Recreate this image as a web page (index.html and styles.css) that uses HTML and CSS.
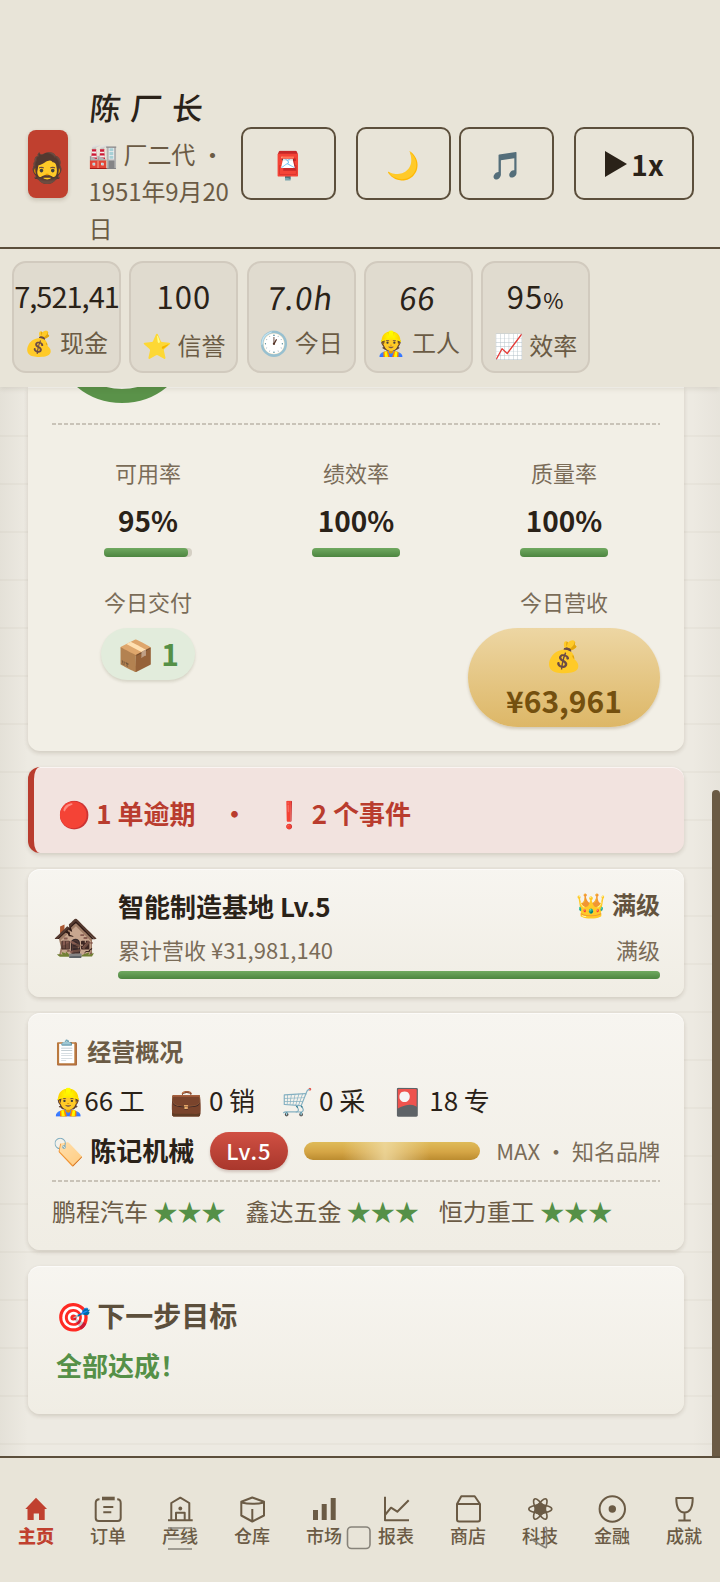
FILE: index.html
```html
<!DOCTYPE html>
<html lang="zh-CN">
<head>
<meta charset="utf-8">
<title>陈记机械</title>
<link rel="stylesheet" href="styles.css">
</head>
<body>
<div class="app">
  <header class="header">
    <div class="avatar">🧔</div>
    <div class="who">
      <div class="name">陈厂长</div>
      <div class="sub">🏭 厂二代 ・<br>1951年9月20<br>日</div>
    </div>
    <button class="hbtn mail">📮</button>
    <button class="hbtn moon">🌙</button>
    <button class="hbtn music">🎵</button>
    <button class="hbtn speed"><svg width="24" height="26" viewBox="0 0 24 26"><path d="M1 0 23 13 1 26Z" fill="#2a2218"/></svg><span>1x</span></button>
  </header>

  <section class="stats">
    <div class="stat"><div class="num cash"><span>7,521,41</span></div><div class="lab">💰 现金</div></div>
    <div class="stat"><div class="num">100</div><div class="lab low">⭐ 信誉</div></div>
    <div class="stat"><div class="num slant">7.0h</div><div class="lab">🕐 今日</div></div>
    <div class="stat"><div class="num slant">66</div><div class="lab">👷 工人</div></div>
    <div class="stat"><div class="num">95<small>%</small></div><div class="lab low">📈 效率</div></div>
  </section>

  <main class="main">
    <section class="card oee">
      <div class="ring"><svg width="144" height="144" viewBox="0 0 144 144"><circle cx="72" cy="72" r="64" fill="none" stroke="#5a9249" stroke-width="14"/></svg></div>
      <div class="dash"></div>
      <div class="cols rates">
        <div class="col"><div class="k">可用率</div><div class="v">95%</div><div class="bar"><i style="width:95%"></i></div></div>
        <div class="col"><div class="k">绩效率</div><div class="v">100%</div><div class="bar"><i style="width:100%"></i></div></div>
        <div class="col"><div class="k">质量率</div><div class="v">100%</div><div class="bar"><i style="width:100%"></i></div></div>
      </div>
      <div class="cols today">
        <div class="col"><div class="k">今日交付</div><div class="pill green">📦 1</div></div>
        <div class="col"></div>
        <div class="col"><div class="k">今日营收</div><div class="pill gold">💰<br>¥63,961</div></div>
      </div>
    </section>

    <section class="card alert"><span>🔴 1 单逾期</span><span class="dot">・</span><span>❗ 2 个事件</span></section>

    <section class="card base">
      <div class="house">🏚️</div>
      <div class="info">
        <div class="line"><b class="title">智能制造基地 Lv.5</b><b class="crown">👑 满级</b></div>
        <div class="line small"><span>累计营收 ¥31,981,140</span><span>满级</span></div>
        <div class="bar"><i style="width:100%"></i></div>
      </div>
    </section>

    <section class="card overview">
      <div class="head">📋 经营概况</div>
      <div class="staff"><span>👷66 工</span><span>💼 0 销</span><span>🛒 0 采</span><span>🎴 18 专</span></div>
      <div class="brand"><b>🏷️ 陈记机械</b><span class="lv">Lv.5</span><span class="goldbar"></span><span class="max">MAX ・ 知名品牌</span></div>
      <div class="dash"></div>
      <div class="clients">
        <span>鹏程汽车 <em>★★★</em></span><span>鑫达五金 <em>★★★</em></span><span>恒力重工 <em>★★★</em></span>
      </div>
    </section>

    <section class="card goal"><div class="gt">🎯 下一步目标</div><div class="gd">全部达成！</div></section>
    <div class="thumb"></div>
  </main>

  <nav class="nav">
    <a class="on"><svg viewBox="0 0 28 28"><path class="f" d="M14 2.700 25 14h-2.300v11H17v-6.500h-5.300V25H5.500V14H3.300Z"/></svg>主页</a>
    <a><svg viewBox="0 0 28 28"><path d="M5.500 4.300C3 4.300 1.700 5.500 1.700 8v15c0 2.200 1 3 3 3h19c2 0 3-1 3-3V8c0-2.500-1-3.700-3.500-3.700M9.300 12h10M9.300 17.300h8"/><path class="f" d="M8 1.700h12.700v3.600H8z"/></svg>订单</a>
    <a><svg viewBox="0 0 28 28"><path d="M2 25.300h24.700M5.300 25V8l9-5.300 9 5.300v17M10 25v-7.300h8.700V25"/><circle class="f" cx="14.300" cy="13.500" r="1.900"/></svg>产线</a>
    <a><svg viewBox="0 0 28 28"><path d="M14.300 2.500 26 6.800V20.500L14.300 26.500 3.300 20.500V6.800ZM3.300 7.500q11 2.700 22.700 0M14.300 14v12"/></svg>仓库</a>
    <a><svg viewBox="0 0 28 28"><path class="f" d="M3 15h5v10H3zM11.700 9h5v16h-5zM20.700 3h5v22h-5z"/></svg>市场</a>
    <a><svg viewBox="0 0 28 28"><path d="M3 1.700v23.600h24M3 20l6-7.300 6.300 4L26.700 5.300"/></svg>报表</a>
    <a><svg viewBox="0 0 28 28"><path d="M7.300 1.300h13.400L26 9v15.500q0 2-2 2H5q-2 0-2-2V9ZM3 9h23"/></svg>商店</a>
    <a><svg viewBox="0 0 28 28"><g class="thin"><ellipse cx="14.300" cy="14" rx="11.500" ry="4"/><ellipse cx="14.300" cy="14" rx="11.500" ry="4" transform="rotate(60 14.300 14)"/><ellipse cx="14.300" cy="14" rx="11.500" ry="4" transform="rotate(120 14.300 14)"/></g><circle class="f" cx="14.300" cy="14" r="6"/></svg>科技</a>
    <a><svg viewBox="0 0 28 28"><circle cx="14.300" cy="14" r="12.700"/><circle class="f" cx="14.300" cy="14" r="3.700"/></svg>金融</a>
    <a><svg viewBox="0 0 28 28"><path d="M6.300 3h16.400c0 9-2.400 14.500-8.200 14.500S6.300 12 6.300 3ZM14.500 17.500v8M8.300 25.500h12.500"/></svg>成就</a>
    <svg class="sys" width="720" height="24" viewBox="0 0 720 24"><g fill="none" stroke="#87837a" stroke-width="1.600"><path d="M168 2h24M168 13h24M168 23h24"/><rect x="347.500" y="1" width="22.500" height="21.500" rx="4"/><path d="M545 1.500q1.500-.8 1.500 1v18q0 1.500-1.500 1L531 13"/></g></svg>
  </nav>
</div>
</body>
</html>
```
FILE: styles.css
```css
* { box-sizing: border-box; }
body {
  margin: 0;
  font-family: "Noto Sans CJK SC", "Noto Color Emoji", sans-serif;
  color: #2a2218;
  background: #e8e4d8;
}
.app { width: 720px; height: 1582px; display: flex; flex-direction: column; overflow: hidden; }

.header {
  height: 249px;
  flex: none;
  display: flex;
  align-items: flex-start;
  padding: 82px 26px 0 28px;
  border-bottom: 2px solid #5c4f3c;
}
.avatar {
  width: 40px; height: 68px;
  margin-top: 48px;
  border-radius: 8px;
  background: #c0402f;
  box-shadow: 0 2px 4px rgba(60, 40, 20, .2);
  font-size: 29px;
  line-height: 71px;
  display: flex;
  justify-content: center;
}
.who { width: 152.500px; margin-left: 21px; white-space: nowrap; flex: none; }
.name {
  height: 50px;
  margin-left: 1px;
  font-size: 31px;
  line-height: 49px;
  font-weight: 500;
  letter-spacing: 10px;
  transform: skewX(-6deg);
}
.sub { font-size: 24px; line-height: 37px; letter-spacing: -.100px; color: #6b5b45; margin-top: 2.500px; }
.hbtn {
  flex: none;
  height: 73px;
  width: 95px;
  margin: 45px 0 0;
  padding: 0;
  border: 2px solid #5c4f3c;
  border-radius: 10px;
  background: none;
  font: 700 27px "Noto Sans CJK SC", "Noto Color Emoji", sans-serif;
  color: #2a2218;
  display: flex;
  align-items: center;
  justify-content: center;
}
.hbtn span { font-size: 28px; }
.moon { margin-left: 20px; }
.music { margin-left: 8px; }
.speed { width: 120px; margin-left: 20px; gap: 3px; }

.stats {
  height: 138px;
  flex: none;
  padding: 12px;
  display: flex;
  gap: 8.300px;
  position: relative;
  z-index: 1;
  box-shadow: 0 2px 5px rgba(60, 45, 20, .1);
  background: #e8e4d8;
}
.stat {
  width: 109px; height: 112px;
  border: 2px solid #d1cabe;
  border-radius: 14px;
  background: #e0dbcf;
  overflow: hidden;
  display: flex;
  flex-direction: column;
  align-items: center;
}
.num { height: 48px; margin-top: 8px; line-height: 49px; font-size: 31px; letter-spacing: 1px; white-space: nowrap; }
.num small { font-size: 22px; }
.cash { font-size: 29px; letter-spacing: -1px; }
.slant { transform: skewX(-8deg); line-height: 52px; }
.lab { font-size: 24px; line-height: 36px; color: #6b5b45; margin-top: 5px; white-space: nowrap; }
.low { margin-top: 8px; }

.main {
  height: 1069px;
  flex: none;
  position: relative;
  overflow: hidden;
  padding: 0 36px 0 28px;
  display: flex;
  flex-direction: column;
  background:
    linear-gradient(90deg, rgba(80, 70, 50, .06), transparent 28px, transparent 692px, rgba(80, 70, 50, .04)),
    repeating-linear-gradient(180deg, transparent 0 46px, rgba(90, 75, 50, .04) 46px 48px) 0 2px / 100% 100%,
    #edeae2;
}
.card {
  flex: none;
  border-radius: 12px;
  background: linear-gradient(#f7f5f0, #f0ede4);
  box-shadow: 0 2px 4px rgba(60, 45, 20, .16), inset 0 1px 0 rgba(255, 255, 255, .6);
  padding: 0 24px;
}
.dash {
  height: 2px;
  background: repeating-linear-gradient(90deg, #c9c3b8 0 4px, transparent 4px 6px);
}
.oee { height: 364px; border-radius: 0 0 12px 12px; background: #f2efe6; }
.ring { height: 17px; overflow: hidden; display: flex; align-items: flex-end; margin: 0 0 19px -2px; }
.ring svg { flex: none; }
.cols { display: grid; grid-template-columns: 192px 192px 192px; gap: 16px; }
.col { display: flex; flex-direction: column; align-items: center; }
.rates { margin-top: 28.500px; }
.k { font-size: 22px; line-height: 36px; color: #7a6c58; }
.v { font-size: 28px; line-height: 46px; font-weight: 700; margin-top: 7.500px; }
.bar { height: 8px; background: #d5d0c4; border-radius: 4px; }
.bar i { display: block; height: 100%; border-radius: 4px; background: linear-gradient(#70a960, #4d8540); }
.rates .bar { width: 88px; height: 9px; margin-top: 5px; }
.today { margin-top: 26px; }
.pill { margin-top: 9px; font-size: 30px; line-height: 46px; font-weight: 700; text-align: center; }
.green { width: 94px; height: 52px; line-height: 51px; border-radius: 26px; background: #e2ecdc; color: #559047; box-shadow: 0 2px 3px rgba(60, 60, 20, .15); }
.gold { width: 192px; height: 99px; padding-top: 3px; border-radius: 50px; color: #74500f; background: linear-gradient(#edd6a3, #ddb767); box-shadow: 0 2px 3px rgba(90, 60, 10, .2); }

.alert {
  height: 86px;
  margin-top: 16px;
  border-left: 6px solid #b93c2e;
  background: #f2e3df;
  color: #b93c2e;
  font-size: 26px;
  font-weight: 700;
  line-height: 92px;
  display: flex;
}
.dot { margin: 0 26px; }

.base { height: 128px; margin-top: 16px; display: flex; }
.house { width: 66px; font-size: 38px; line-height: 130px; }
.info { flex: 1; padding-top: 15px; }
.line { display: flex; justify-content: space-between; align-items: center; height: 42px; }
.title { font-size: 26px; }
.crown { font-size: 24px; color: #63533e; margin-top: -3px; }
.small { font-size: 22px; height: 45px; color: #7a6c58; }

.overview { height: 237px; margin-top: 16px; }
.head { padding-top: 18px; font-size: 24px; line-height: 40px; font-weight: 700; color: #6b5b45; }
.staff { display: flex; gap: 26px; margin-top: 6px; font-size: 26px; letter-spacing: -.050px; line-height: 46px; height: 46px; }
.brand { display: flex; align-items: center; height: 52px; margin-top: 2px; }
.brand b { font-size: 26px; line-height: 38px; white-space: nowrap; width: 158px; padding-bottom: 3px; }
.lv {
  width: 78px; height: 38px;
  border-radius: 19px;
  background: linear-gradient(#d05043, #a9372c);
  color: #fff;
  font-weight: 500;
  font-size: 22px;
  line-height: 36px;
  letter-spacing: 1px;
  text-align: center;
  box-shadow: 0 2px 3px rgba(80, 20, 10, .2);
}
.goldbar {
  width: 176px; height: 18px;
  margin: 0 auto 0 16px;
  border-radius: 9px;
  background:
    linear-gradient(90deg, transparent 22%, rgba(240, 220, 165, .8) 46%, rgba(240, 220, 165, .7) 50%, transparent 72%),
    linear-gradient(#dfbb59, #d5a545 55%, #bb8c30);
}
.max { font-size: 22px; color: #7a6c58; white-space: nowrap; padding-bottom: 2px; }
.overview .dash { margin-top: 3px; }
.clients { display: flex; gap: 20px; margin-top: 9px; font-size: 24px; line-height: 40px; color: #6b5b45; white-space: nowrap; }
.clients em { font-style: normal; color: #559047; }

.goal { height: 148px; margin-top: 16px; padding: 24px 28px 0; font-weight: 700; }
.gt { font-size: 28px; line-height: 50px; color: #5c4f3c; }
.gd { font-size: 26px; line-height: 49px; color: #559047; }
.thumb { position: absolute; right: 0; top: 403px; width: 8px; height: 670px; border-radius: 4px 4px 0 0; background: #6b5b45; }

.nav {
  flex: 1;
  position: relative;
  display: grid;
  grid-template-columns: repeat(10, 72px);
  border-top: 2px solid #5c4f3c;
  background: #e8e4d8;
}
.nav a { padding-top: 37px; display: flex; flex-direction: column; align-items: center; font-size: 18px; line-height: 25px; font-weight: 500; color: #6b5b45; }
.nav a svg { width: 28px; height: 28px; fill: none; stroke: currentColor; stroke-width: 2; stroke-linejoin: round; }
.nav a .f { fill: currentColor; stroke: none; }
.nav a .thin { stroke-width: 1.600; }
.nav .on { color: #c0402f; font-weight: 900; }
.sys { position: absolute; left: 0; top: 68px; }
```
